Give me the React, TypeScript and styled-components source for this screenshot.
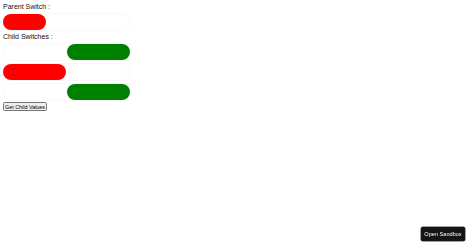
import React, { useState } from "react";
import styled, { createGlobalStyle } from "styled-components";

const Global = createGlobalStyle`
  html, body { margin: 0; padding: 0; background: #fff; }
  body { font-family: "Liberation Sans", Arial, sans-serif; }
  #root { padding: 3px; }
`;

const Label = styled.div`
  font-size: 7px;
  line-height: 8px;
  color: #111;
  margin: 0 0 3px;
  height: 8px;
`;

const Track = styled.div<{ $mb?: number }>`
  width: 127px;
  height: 16px;
  border-radius: 8px;
  box-shadow: 0 0 0 0.5px #f2f2f2;
  display: flex;
  margin-bottom: ${(p) => p.$mb ?? 4}px;
  cursor: pointer;
`;

const Knob = styled.div<{ $on: boolean; $w: number }>`
  width: ${(p) => p.$w}px;
  height: 16px;
  border-radius: 8px;
  background: ${(p) => (p.$on ? "#008000" : "#ff0000")};
  margin-left: ${(p) => (p.$on ? "auto" : "0")};
`;

const Btn = styled.button`
  font-family: "Liberation Sans", Arial, sans-serif;
  font-size: 5.4px;
  line-height: 8px;
  height: 9px;
  width: 44px;
  padding: 0;
  white-space: nowrap;
  background: #efefef;
  border: 0.5px solid #767676;
  border-radius: 1.5px;
  color: #000;
  display: block;
  margin-top: -2px;
`;

const Sandbox = styled.a`
  position: fixed;
  right: 9px;
  bottom: 7px;
  width: 44px;
  height: 14px;
  background: #151515;
  color: #fff;
  font-size: 5.6px;
  white-space: nowrap;
  border-radius: 2px;
  display: flex;
  align-items: center;
  justify-content: center;
  box-shadow: 0 0 0 0.5px #444;
`;

export default function App() {
  const [parent, setParent] = useState(false);
  const [kids, setKids] = useState([true, false, true]);
  return (
    <>
      <Global />
      <Label>Parent Switch :</Label>
      <Track $mb={3} onClick={() => setParent(!parent)}>
        <Knob $on={parent} $w={43} />
      </Track>
      <Label>Child Switches :</Label>
      {kids.map((k, i) => (
        <Track key={i} onClick={() => setKids(kids.map((v, j) => (j === i ? !v : v)))}>
          <Knob $on={k} $w={63} />
        </Track>
      ))}
      <Btn>Get Child Values</Btn>
      <Sandbox>Open Sandbox</Sandbox>
    </>
  );
}
